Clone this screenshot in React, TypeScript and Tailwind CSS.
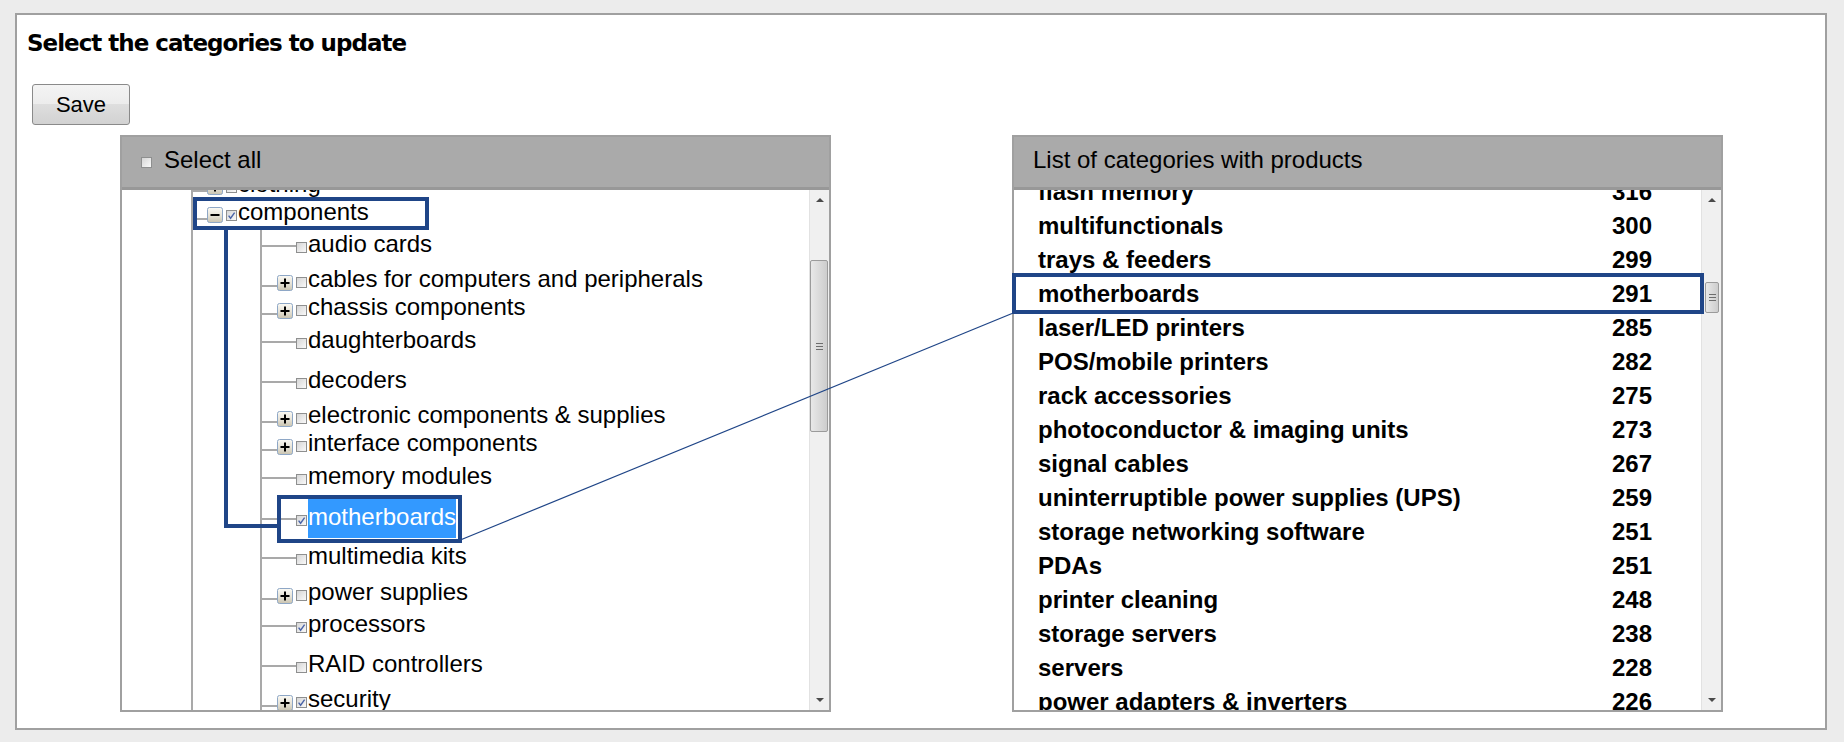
import React from 'react';

function Checkbox({ checked = false, className = '' }: { checked?: boolean; className?: string }) {
  return (
    <svg width="11" height="11" viewBox="0 0 11 11" className={`shrink-0 ${className}`}>
      <defs>
        <linearGradient id="cbg" x1="0" y1="0" x2="1" y2="1">
          <stop offset="0" stopColor="#d4d4d4" />
          <stop offset="1" stopColor="#fbfbfb" />
        </linearGradient>
      </defs>
      <rect x="0.5" y="0.5" width="10" height="10" fill="url(#cbg)" stroke="#8e8f8f" />
      {checked && <path d="M2.6 5.6 L4.6 8.2 L8.6 2.6" fill="none" stroke="#4a64a8" strokeWidth="1.4" />}
    </svg>
  );
}

function Expander({ minus = false, className = '' }: { minus?: boolean; className?: string }) {
  return (
    <svg width="16" height="16" viewBox="0 0 16 16" className={`shrink-0 ${className}`}>
      <defs>
        <linearGradient id="exg" x1="0" y1="0" x2="0" y2="1">
          <stop offset="0" stopColor="#fbfaf5" />
          <stop offset="0.55" stopColor="#e6e2d6" />
          <stop offset="1" stopColor="#c9c3b0" />
        </linearGradient>
      </defs>
      <rect x="0.5" y="0.5" width="15" height="15" rx="2" fill="url(#exg)" stroke="#8ea7c6" />
      <path d="M3.5 8 H12.5" stroke="#000" strokeWidth="2" />
      {!minus && <path d="M8 3.5 V12.5" stroke="#000" strokeWidth="2" />}
    </svg>
  );
}

type Child = { label: string; h: string; plus?: boolean; checked?: boolean; selected?: boolean };

const children: Child[] = [
  { label: 'audio cards', h: 'h-[35px]' },
  { label: 'cables for computers and peripherals', h: 'h-[28px]', plus: true },
  { label: 'chassis components', h: 'h-[33px]', plus: true },
  { label: 'daughterboards', h: 'h-[40px]' },
  { label: 'decoders', h: 'h-[35px]' },
  { label: 'electronic components & supplies', h: 'h-[28px]', plus: true },
  { label: 'interface components', h: 'h-[33px]', plus: true },
  { label: 'memory modules', h: 'h-[41px]' },
  { label: 'motherboards', h: 'h-[39px]', checked: true, selected: true },
  { label: 'multimedia kits', h: 'h-[36px]' },
  { label: 'power supplies', h: 'h-[32px]', plus: true },
  { label: 'processors', h: 'h-[40px]', checked: true },
  { label: 'RAID controllers', h: 'h-[35px]' },
  { label: 'security', h: 'h-[34px]', plus: true, checked: true },
];

const products: [string, number][] = [
  ['flash memory', 316],
  ['multifunctionals', 300],
  ['trays & feeders', 299],
  ['motherboards', 291],
  ['laser/LED printers', 285],
  ['POS/mobile printers', 282],
  ['rack accessories', 275],
  ['photoconductor & imaging units', 273],
  ['signal cables', 267],
  ['uninterruptible power supplies (UPS)', 259],
  ['storage networking software', 251],
  ['PDAs', 251],
  ['printer cleaning', 248],
  ['storage servers', 238],
  ['servers', 228],
  ['power adapters & inverters', 226],
];

function Scrollbar({ thumb }: { thumb: string }) {
  return (
    <div className="flex h-full w-[20px] shrink-0 flex-col border-l border-[#e2e2e2] bg-[#f0f0f0]">
      <div className="flex h-[20px] shrink-0 items-center justify-center">
        <div className="h-0 w-0 border-x-[4px] border-b-[4px] border-x-transparent border-b-[#4a4a4a]" />
      </div>
      <div className="flex-1">
        <div
          className={`${thumb} flex flex-col items-center justify-center gap-[2px] rounded-[2px] border border-[#9b9b9b] bg-linear-to-r from-[#e8e8e8] to-[#cdcdcd]`}
        >
          <div className="h-[1px] w-[7px] bg-[#6d6d6d]" />
          <div className="h-[1px] w-[7px] bg-[#6d6d6d]" />
          <div className="h-[1px] w-[7px] bg-[#6d6d6d]" />
        </div>
      </div>
      <div className="flex h-[20px] shrink-0 items-center justify-center">
        <div className="h-0 w-0 border-x-[4px] border-t-[4px] border-x-transparent border-t-[#4a4a4a]" />
      </div>
    </div>
  );
}

function TreeChild({ c }: { c: Child }) {
  return (
    <div className={`${c.h} pt-[4px]`}>
      <div className="flex h-[24px] items-center">
        {c.plus ? (
          <>
            <div className="h-[2px] w-[15px] shrink-0 translate-y-[7px] bg-[#a9a9a9]" />
            <Expander className="translate-y-[4px]" />
            <Checkbox checked={c.checked} className="ml-[3px] translate-y-[3px]" />
          </>
        ) : (
          <>
            <div className="h-[2px] w-[34px] shrink-0 translate-y-[2px] bg-[#a9a9a9]" />
            <Checkbox checked={c.checked} className="translate-y-[3px]" />
          </>
        )}
        {c.selected ? (
          <span className="ml-[1px] whitespace-nowrap bg-[#3399ff] leading-[24px] text-white shadow-[0_-6px_0_0_#3399ff,0_9px_0_0_#3399ff]">
            {c.label}
          </span>
        ) : (
          <span className="ml-[1px] whitespace-nowrap leading-[24px]">{c.label}</span>
        )}
      </div>
    </div>
  );
}

export default function App() {
  return (
    <div className="relative h-[742px] w-[1844px] overflow-hidden bg-[#ececec] font-['Liberation_Sans',Arial,sans-serif] text-black">
      <div className="ml-[15px] mt-[13px] h-[717px] w-[1812px] border-2 border-[#a0a0a0] bg-white pl-[10px] pt-[14px]">
        <h1 className="font-['DejaVu_Sans',Verdana,sans-serif] text-[23px] font-bold leading-[28px] tracking-[-1px]">
          Select the categories to update
        </h1>
        <button className="ml-[5px] mt-[27px] flex h-[41px] w-[98px] items-center justify-center rounded-[3px] border border-[#8a8a8a] bg-[linear-gradient(#f4f4f4_0%,#ececec_50%,#dedede_50%,#d2d2d2_100%)] text-[22px] leading-[24px]">
          Save
        </button>

        <div className="ml-[93px] mt-[10px] flex gap-[181px]">
          {/* Left panel */}
          <div className="flex h-[577px] w-[711px] flex-col border-2 border-[#a0a0a0] bg-white">
            <div className="flex h-[53px] shrink-0 items-center border-b-[3px] border-[#989898] bg-[#aaaaaa] pb-[5px] pl-[19px]">
              <Checkbox className="translate-y-[3px]" />
              <span className="ml-[12px] text-[24px] leading-[24px]">Select all</span>
            </div>
            <div className="flex min-h-0 flex-1">
              <div className="relative flex-1 overflow-hidden text-[24px]">
                <div className="ml-[69px] border-l-2 border-[#a9a9a9]">
                  <div className="-mt-[22px] h-[28px] pt-[4px]">
                    <div className="flex h-[24px] items-center">
                      <div className="h-[2px] w-[14px] shrink-0 translate-y-[7px] bg-[#a9a9a9]" />
                      <Expander className="translate-y-[3px]" />
                      <Checkbox className="ml-[3px] translate-y-[3px]" />
                      <span className="ml-[1px] whitespace-nowrap leading-[24px]">clothing</span>
                    </div>
                  </div>
                  <div className="h-[32px] pt-[4px]">
                    <div className="flex h-[24px] items-center">
                      <div className="h-[2px] w-[14px] shrink-0 translate-y-[7px] bg-[#a9a9a9]" />
                      <Expander minus className="translate-y-[3px]" />
                      <Checkbox checked className="ml-[3px] translate-y-[3px]" />
                      <span className="ml-[1px] whitespace-nowrap leading-[24px]">components</span>
                    </div>
                  </div>
                  <div className="ml-[67px] border-l-2 border-[#a9a9a9]">
                    {children.map((c) => (
                      <TreeChild key={c.label} c={c} />
                    ))}
                  </div>
                </div>
              </div>
              <Scrollbar thumb="mt-[50px] mr-[1px] h-[172px]" />
            </div>
          </div>

          {/* Right panel */}
          <div className="flex h-[577px] w-[711px] flex-col border-2 border-[#a0a0a0] bg-white">
            <div className="flex h-[53px] shrink-0 items-center border-b-[3px] border-[#989898] bg-[#aaaaaa] pb-[5px] pl-[19px]">
              <span className="text-[24px] leading-[24px]">List of categories with products</span>
            </div>
            <div className="flex min-h-0 flex-1">
              <div className="flex-1 overflow-hidden pl-[24px] text-[24px] font-bold">
                <div className="-mt-[15px]">
                  {products.map(([name, n]) => (
                    <div key={name} className="flex h-[34px] leading-[34px]">
                      <span className="w-[574px] shrink-0 whitespace-nowrap">{name}</span>
                      <span>{n}</span>
                    </div>
                  ))}
                </div>
              </div>
              <Scrollbar thumb="mt-[72px] ml-[3px] mr-[2px] h-[31px]" />
            </div>
          </div>
        </div>
      </div>

      {/* Annotation overlays */}
      <div className="pointer-events-none absolute left-[193px] top-[197px] h-[33px] w-[236px] border-4 border-[#1f4587]" />
      <div className="pointer-events-none absolute left-[224px] top-[229px] h-[299px] w-[54px] border-b-4 border-l-4 border-[#1f4587]" />
      <div className="pointer-events-none absolute left-[277px] top-[495px] h-[48px] w-[185px] border-4 border-[#1f4587]" />
      <div className="pointer-events-none absolute left-[1012px] top-[273px] h-[41px] w-[692px] border-4 border-[#1f4587]" />
      <svg className="pointer-events-none absolute left-0 top-0" width="1844" height="742">
        <line x1="461.5" y1="539.5" x2="1012" y2="313.5" stroke="#1f4587" strokeWidth="1.2" />
      </svg>
    </div>
  );
}
